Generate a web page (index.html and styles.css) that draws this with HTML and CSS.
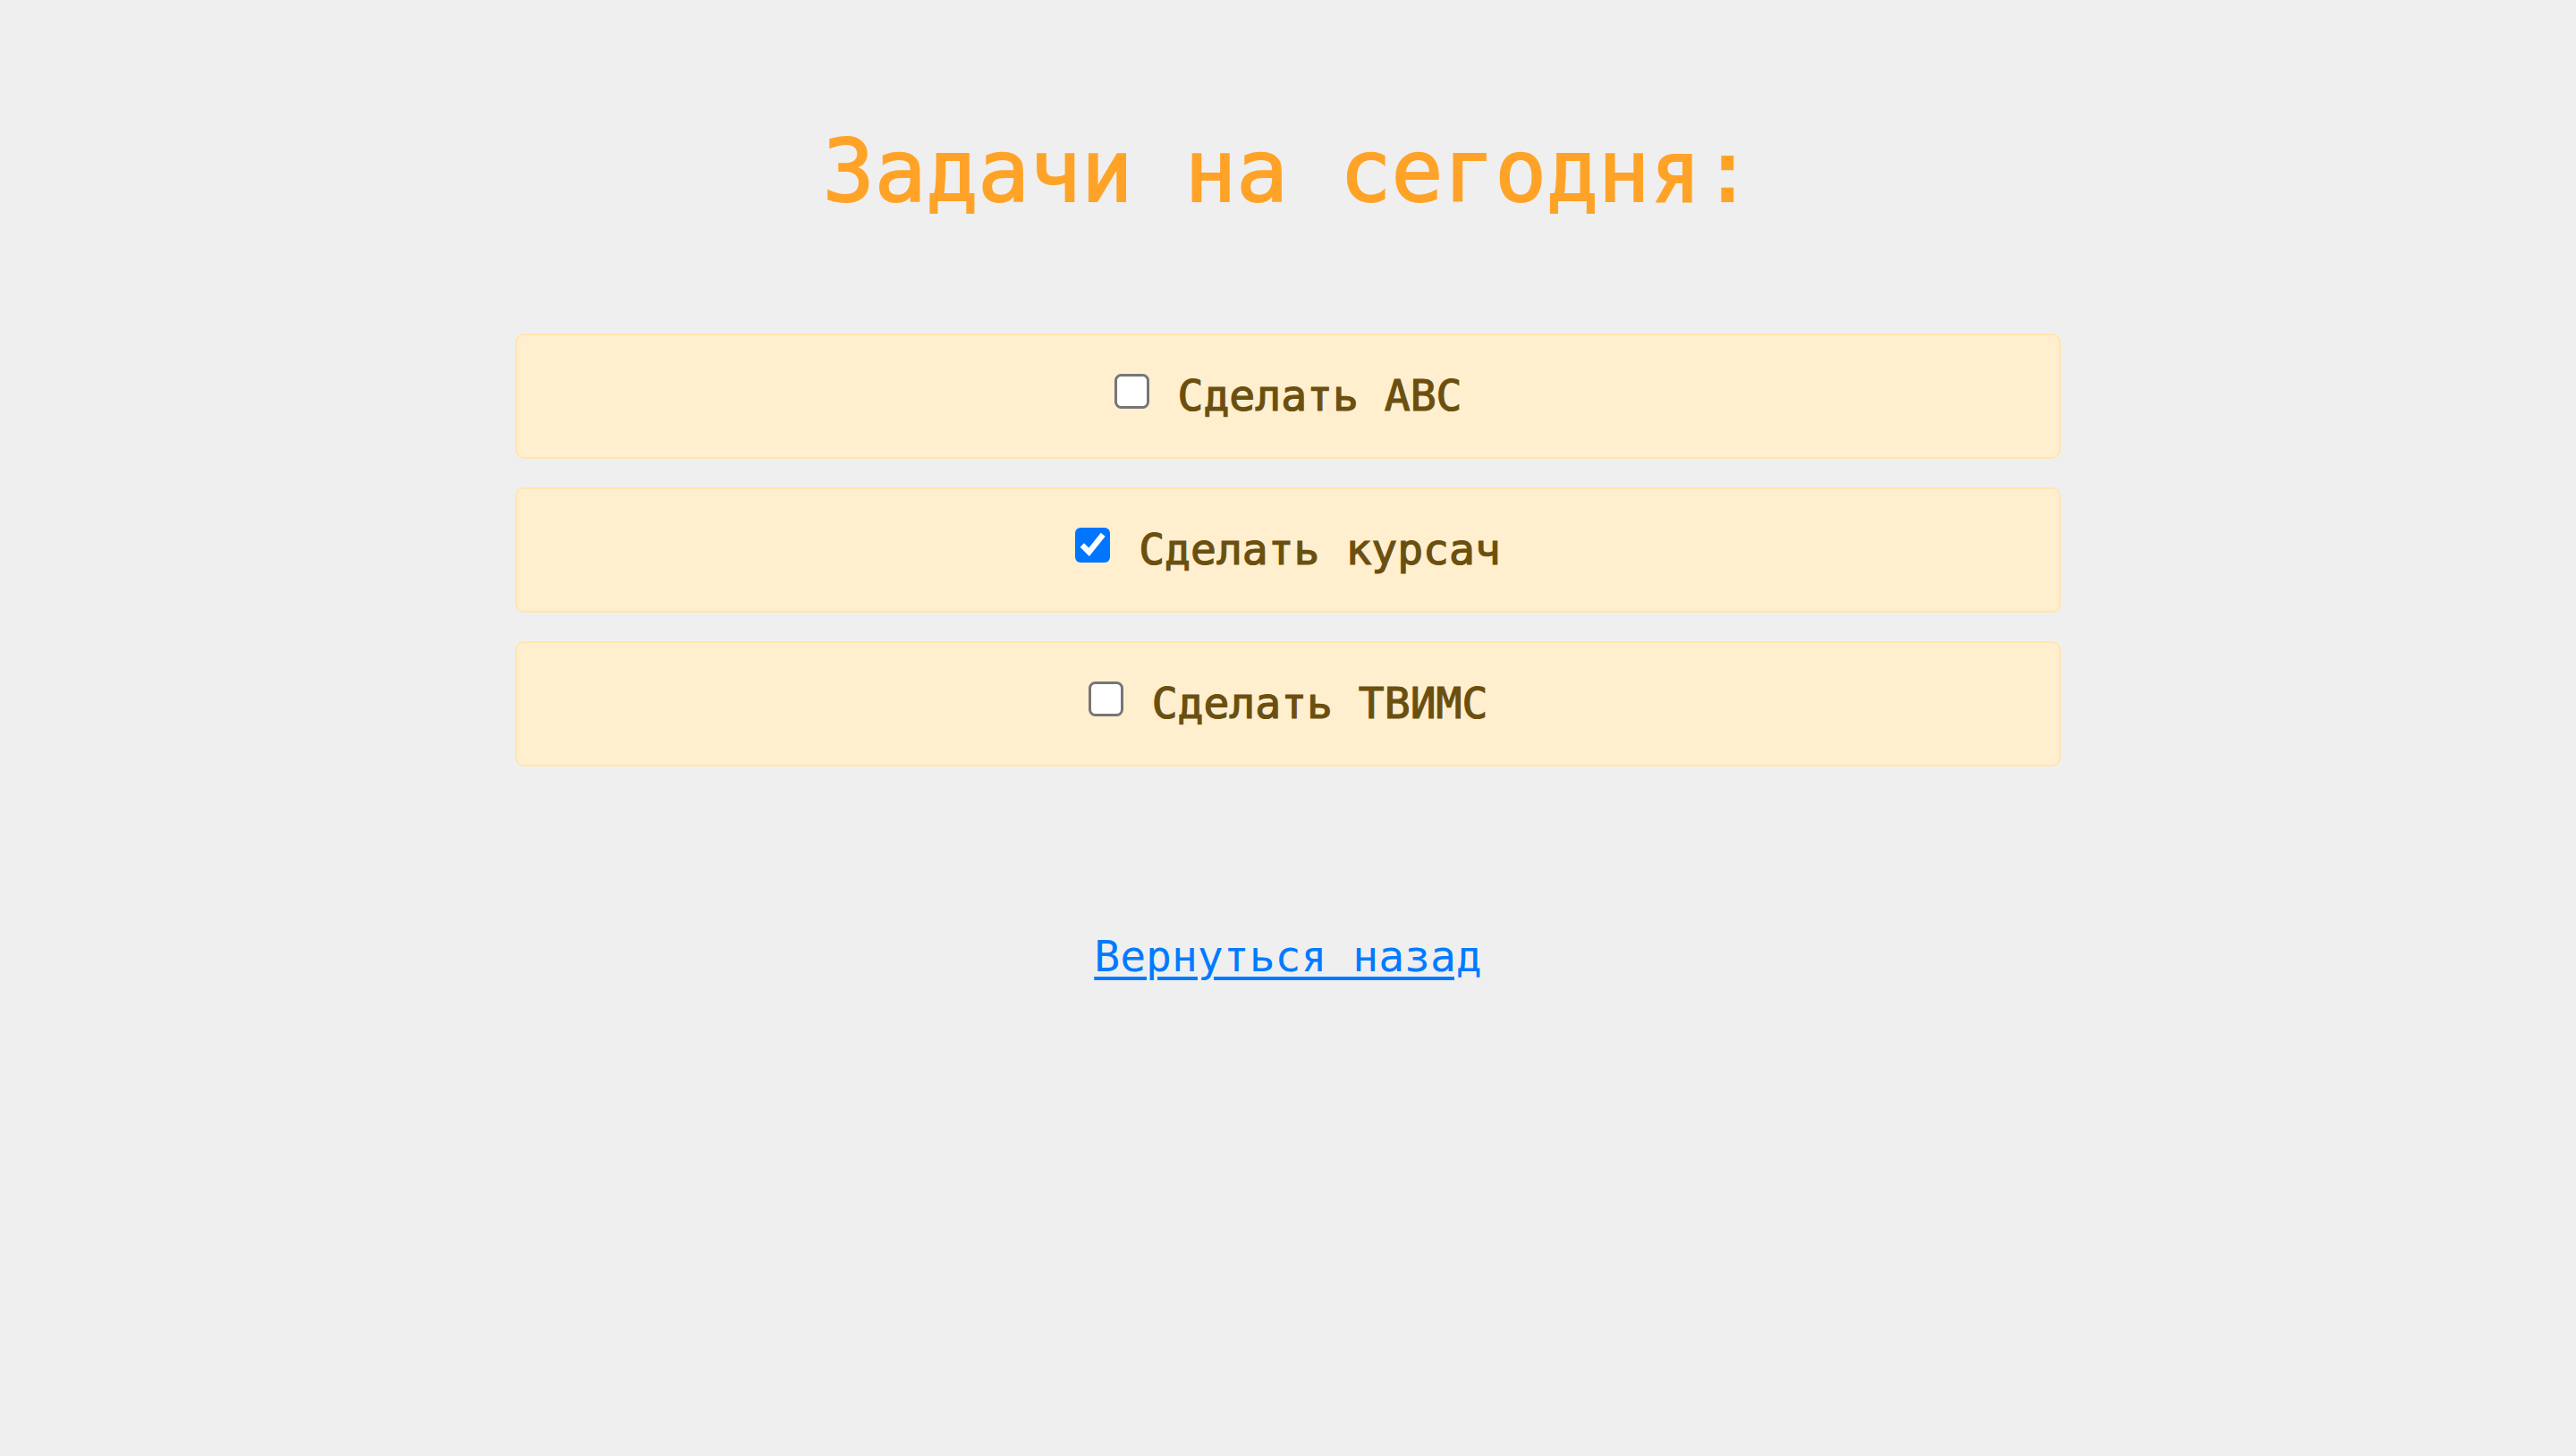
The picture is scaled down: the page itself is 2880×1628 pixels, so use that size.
FILE: index.html
```html
<!DOCTYPE html>
<html lang="ru">
<head>
<meta charset="utf-8">
<title>Задачи на сегодня</title>
<link rel="stylesheet" href="styles.css">
</head>
<body>
<main class="page">
  <h1 class="title">Задачи на сегодня:</h1>
  <ul class="tasks">
    <li class="task"><label class="task-label"><input type="checkbox" class="task-check"><span class="task-text">Сделать ABC</span></label></li>
    <li class="task"><label class="task-label"><input type="checkbox" class="task-check" checked><span class="task-text">Сделать курсач</span></label></li>
    <li class="task"><label class="task-label"><input type="checkbox" class="task-check"><span class="task-text">Сделать ТВИМС</span></label></li>
  </ul>
  <a class="back" href="#">Вернуться назад</a>
</main>
</body>
</html>
```
FILE: styles.css
```css
html, body {
  margin: 0;
  padding: 0;
  background: #efefef;
}

.page {
  display: flex;
  flex-direction: column;
  align-items: center;
  padding-top: 135px;
  font-family: "DejaVu Sans Mono", monospace;
}

.title {
  margin: 0;
  font-size: 96px;
  line-height: 1.2;
  font-weight: normal;
  color: #ffa328;
  -webkit-text-stroke: 2px #ffa328;
}

.tasks {
  list-style: none;
  margin: 123px 0 0;
  padding: 0;
  width: 1728px;
  display: flex;
  flex-direction: column;
  gap: 32px;
}

.task {
  box-sizing: border-box;
  height: 140px;
  background: #ffefcf;
  border: 2px solid #ffe6ad;
  border-radius: 10px;
  display: flex;
  align-items: center;
  justify-content: center;
}

.task-label {
  display: flex;
  align-items: center;
  font-size: 48px;
  line-height: 1.2;
  color: #6b4f0f;
  font-weight: normal;
  -webkit-text-stroke: 1.2px #6b4f0f;
}

.task-check {
  zoom: 3;
  width: 13px;
  height: 13px;
  margin: 0 0 4px 0;
}

.task-text {
  margin-left: 32px;
}

.back {
  margin-top: 184px;
  font-size: 48px;
  line-height: 1.2;
  color: #007bff;
  text-decoration: underline;
  text-decoration-thickness: 4px;
  text-underline-offset: 6px;
}
```
